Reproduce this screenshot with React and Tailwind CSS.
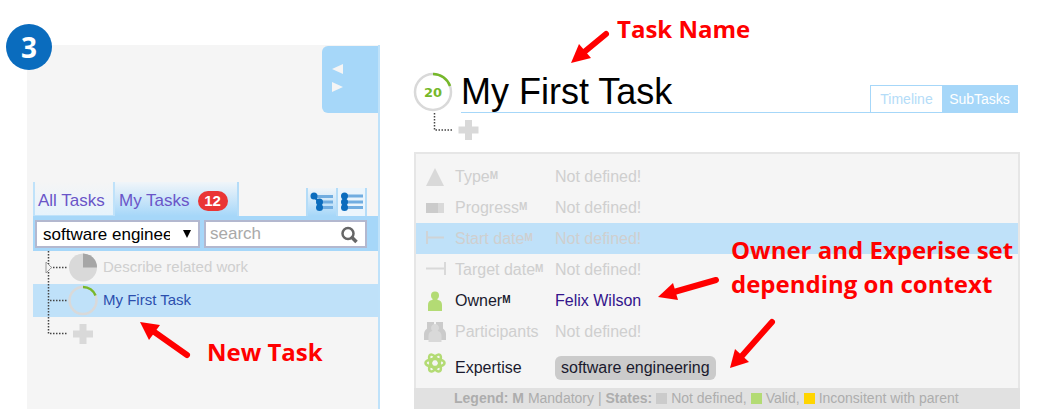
import { useState } from 'react'

const FIELDS = [
  { name: 'Type', mandatory: true, icon: TypeIcon },
  { name: 'Progress', mandatory: true, icon: ProgressIcon },
  { name: 'Start date', mandatory: true, icon: StartIcon, active: true },
  { name: 'Target date', mandatory: true, icon: TargetIcon },
  { name: 'Owner', mandatory: true, icon: OwnerIcon, value: 'Felix Wilson' },
  { name: 'Participants', icon: ParticipantsIcon },
]

export default function App() {
  return (
    <div className="relative flex items-start bg-white pb-1 pl-[27px] pr-[29px] font-['Liberation_Sans',Arial,sans-serif]">
      <Sidebar />
      <TaskDetail />
      <Annotations />
    </div>
  )
}

function Sidebar() {
  const [scope, setScope] = useState('software engineering')

  return (
    <aside className="mt-[45px] min-h-[364px] w-[353px] shrink-0 border-r-2 border-[#bfe2fa] bg-[#f5f5f5]">
      <div className="flex justify-end pt-px">
        <button
          type="button"
          aria-label="Resize panel"
          className="h-[67px] w-14 rounded-l-md bg-[#a6d7f9] pb-1 pl-2.5"
        >
          <svg width="12" height="28" viewBox="0 0 12 28" fill="#f5f5f5">
            <path d="M0 5 11 0v10zM0 18l11 5-11 5z" transform="matrix(1 0 0 1 0 0)" />
          </svg>
        </button>
      </div>

      <div className="mt-[69px] flex h-[34px] items-stretch pl-[6px] text-[17px] text-[#6a55c8]">
        <button
          type="button"
          className="w-[82px] whitespace-nowrap border-x-2 border-b border-[#bfe2fa] bg-linear-to-b from-[#f5f5f5] to-[#e6f3fc] pl-[3px] pt-1 text-left"
        >
          All Tasks
        </button>
        <button
          type="button"
          className="flex w-[124px] items-center gap-2 border-r-2 border-[#b4dcf8] bg-linear-to-b from-[#f0f5f9] to-[#a6d7f9] pl-1 pt-1"
        >
          My Tasks
          <span className="flex h-5 w-[30px] items-center justify-center rounded-full bg-[#ea3535] text-[15px] font-bold text-white">
            12
          </span>
        </button>
        <div className="ml-auto mr-[11px] mt-[6px] flex">
          <button
            type="button"
            aria-label="Tree view"
            className="flex w-[30px] justify-center border-l-2 border-[#b4dcf8] bg-linear-to-b from-[#f0f5f9] to-[#a6d7f9] pt-1"
          >
            <svg width="24" height="20" viewBox="0 0 24 20">
              <path d="M4 4.500h19M10 10h13M10 15.500h13" stroke="#71ade0" strokeWidth="3" />
              <path d="M4 4.500 9 10v6" fill="none" stroke="#0b6cbd" strokeWidth="2" />
              <g fill="#0b6cbd">
                <circle cx="4" cy="4" r="3.500" />
                <circle cx="9.500" cy="10" r="3.500" />
                <circle cx="9.500" cy="15.500" r="3.500" />
              </g>
            </svg>
          </button>
          <button
            type="button"
            aria-label="List view"
            className="flex w-[31px] justify-center border-x-2 border-[#b4dcf8] bg-[#ebf5fc] pt-1"
          >
            <svg width="24" height="20" viewBox="0 0 24 20">
              <path d="M5 4h18M5 10h18M5 15.500h18" stroke="#71ade0" strokeWidth="3" />
              <path d="M4.500 4v12" stroke="#0b6cbd" strokeWidth="2" />
              <g fill="#0b6cbd">
                <circle cx="4.500" cy="4" r="3.500" />
                <circle cx="4.500" cy="10" r="3.500" />
                <circle cx="4.500" cy="15.500" r="3.500" />
              </g>
            </svg>
          </button>
        </div>
      </div>

      <div className="ml-[6px] flex h-[35px] items-center gap-1 bg-[#a6d7f9] pl-0.5 pr-[11px] text-[17px]">
        <div className="relative w-[165px]">
          <select
            aria-label="Context"
            value={scope}
            onChange={(e) => setScope(e.target.value)}
            className="block h-7 w-full appearance-none border-2 border-[#b3b8cf] bg-white pl-1.5 pr-7 text-black"
          >
            <option>software engineering</option>
          </select>
          <svg
            className="pointer-events-none absolute right-2 top-2.5"
            width="10"
            height="8"
            viewBox="0 0 10 8"
          >
            <path d="M1 0h8L5 8z" />
          </svg>
        </div>
        <div className="relative flex-1">
          <input
            type="search"
            aria-label="Search"
            placeholder="search"
            className="block h-7 w-full border-2 border-[#b3b8cf] bg-white pl-1 pr-8 placeholder-[#a9a9a9]"
          />
          <svg
            className="pointer-events-none absolute right-2 top-1.5"
            width="18"
            height="18"
            viewBox="0 0 18 18"
            fill="none"
            stroke="#666"
          >
            <circle cx="7" cy="7.500" r="5.500" strokeWidth="2.500" />
            <path d="M10 10.500 15.500 16" strokeWidth="3.500" />
          </svg>
        </div>
      </div>

      <ul className="pl-[6px] text-[15px]">
        <TreeRow label="Describe related work" expandable className="text-[#cfcfcf]">
          <circle cx="50" cy="16.500" r="14" fill="#d9d9d9" />
          <path d="M50 16.500v-14a14 14 0 0 1 14 14z" fill="#a6a6a6" />
        </TreeRow>
        <TreeRow label="My First Task" className="bg-[#bfe1f9] text-[#2b4fae]">
          <circle cx="50" cy="16.500" r="13.500" fill="none" stroke="#d9d9d9" strokeWidth="2.500" />
          <path
            d="M50 3a13.500 13.500 0 0 1 12.500 8.500"
            fill="none"
            stroke="#76b82a"
            strokeWidth="2.500"
          />
        </TreeRow>
        <TreeRow last>
          <path d="M46.500 7h7v6.500H60v7h-6.500V27h-7v-6.500H40v-7h6.500z" fill="#d9d9d9" />
        </TreeRow>
      </ul>
    </aside>
  )
}

function TreeRow({ label, expandable, last, className = '', children }) {
  return (
    <li className={`flex h-[33px] items-center gap-1 ${className}`}>
      <svg width="66" height="33" viewBox="0 0 66 33" className="shrink-0">
        <path
          d={last ? 'M15.500 0v17' : 'M15.500 0v33'}
          stroke="#444"
          strokeWidth="1.500"
          strokeDasharray="1.500 1.500"
        />
        <path d="M17 16.500h17" stroke="#444" strokeWidth="1.500" strokeDasharray="1.500 1.500" />
        {expandable && <path d="M13 11v11l5.500-5.500z" fill="#f5f5f5" stroke="#999" />}
        {children}
      </svg>
      {label && <span>{label}</span>}
    </li>
  )
}

function TaskDetail() {
  return (
    <main className="ml-[33px] min-w-0 flex-1 pt-[72px]">
      <header className="mr-0.5 flex h-[41px] gap-2">
        <svg width="40" height="40" viewBox="0 0 40 40" className="shrink-0">
          <circle cx="20" cy="20" r="18" fill="none" stroke="#d9d9d9" strokeWidth="2.500" />
          <path d="M20 2a18 18 0 0 1 17 12" fill="none" stroke="#76b82a" strokeWidth="2.500" />
          <text
            x="20"
            y="25"
            textAnchor="middle"
            fill="#76b82a"
            className="font-['DejaVu_Sans',sans-serif] text-[13px] font-bold"
          >
            20
          </text>
        </svg>
        <div className="flex flex-1 items-end justify-between border-b border-[#a6d7f9]">
          <h1 className="text-[36px] leading-10 text-black">My First Task</h1>
          <div className="flex h-[27px] border-x border-t border-[#a6d7f9] text-[14px]">
            <button type="button" className="w-[71px] text-[#b4dcf8]">
              Timeline
            </button>
            <button type="button" className="w-[75px] bg-[#a6d7f9] text-white">
              SubTasks
            </button>
          </div>
        </div>
      </header>

      <button type="button" aria-label="Add subtask" className="block h-[39px] align-top">
        <svg width="68" height="39" viewBox="0 0 68 39">
          <path
            d="M21.500 0v17h18"
            fill="none"
            stroke="#444"
            strokeWidth="1.500"
            strokeDasharray="1.500 1.500"
          />
          <path d="M52 7h7v6.500h6.500v7H59V27h-7v-6.500h-6.500v-7H52z" fill="#d9d9d9" />
        </svg>
      </button>

      <section className="ml-px border-2 border-b-0 border-[#e6e6e6] bg-[#f5f5f5] pt-[7px]">
        <dl className="text-[16px]">
          {FIELDS.map((field) => (
            <Field key={field.name} {...field} />
          ))}
          <div className="flex h-[41px] items-center">
            <dt className="flex w-[139px] items-center gap-[9px] text-[#1a1a2e]">
              <span className="-mt-2">
                <ExpertiseIcon />
              </span>
              Expertise
            </dt>
            <dd className="rounded-md bg-[#cbcbcb] px-1.5 text-[#1a1a2e]">software engineering</dd>
          </div>
        </dl>
      </section>
      <footer className="ml-px flex h-[21px] items-center gap-1 whitespace-nowrap bg-[#e1e1e1] pl-10 text-[14px] text-[#adadad]">
        <span>
          <b>Legend: M</b> Mandatory | <b>States:</b>
        </span>
        <i className="size-[11px] bg-[#cbcbcb]" />
        <span>Not defined,</span>
        <i className="size-[11px] bg-[#b3db74]" />
        <span>Valid,</span>
        <i className="size-[11px] bg-[#ffd500]" />
        <span>Inconsitent with parent</span>
      </footer>
    </main>
  )
}

function Field({ name, mandatory, icon: Icon, value, active }) {
  return (
    <div
      className={`flex h-[31px] items-center ${active ? 'bg-[#bfe1f9]' : ''} ${
        value ? 'text-[#1a1a2e]' : 'text-[#cfcfcf]'
      }`}
    >
      <dt className="flex w-[139px] items-center gap-[9px] whitespace-nowrap">
        <Icon />
        <span className="flex">
          {name}
          {mandatory && <b className="text-[10px] leading-[22px]">M</b>}
        </span>
      </dt>
      <dd>
        {value ? (
          <a href="#owner" className="text-[#33148c]">
            {value}
          </a>
        ) : (
          'Not defined!'
        )}
      </dd>
    </div>
  )
}

function FieldIcon({ children }) {
  return (
    <svg width="22" height="24" viewBox="0 0 22 24" className="ml-2 shrink-0">
      {children}
    </svg>
  )
}

function TypeIcon() {
  return (
    <FieldIcon>
      <path d="M11 3l9 18H2z" fill="#d9d9d9" />
    </FieldIcon>
  )
}

function ProgressIcon() {
  return (
    <FieldIcon>
      <path d="M2 7h12v10H2z" fill="#cbcbcb" />
      <path d="M14 7h6v10h-6z" fill="#d9d9d9" />
    </FieldIcon>
  )
}

function StartIcon() {
  return (
    <FieldIcon>
      <path d="M3 4v13M3 10.500h17" stroke="#cfd3d6" strokeWidth="2" />
    </FieldIcon>
  )
}

function TargetIcon() {
  return (
    <FieldIcon>
      <path d="M21 4v13M2 10.500h18" stroke="#d9d9d9" strokeWidth="2" />
    </FieldIcon>
  )
}

function OwnerIcon() {
  return (
    <FieldIcon>
      <g fill="#b3db74">
        <circle cx="11" cy="6.500" r="4" />
        <path d="M4 22v-6c0-3 1.500-4.500 4-5l1-1h4l1 1c2.500.5 4 2 4 5v6z" />
      </g>
    </FieldIcon>
  )
}

function ParticipantsIcon() {
  return (
    <FieldIcon>
      <g fill="#cbcbcb">
        <path d="M3 2h7v7H3zM12 2h7v7h-7z" />
        <path d="M0 20v-6c0-3 2-5 4-6h14c2 1 4 3 4 6v6z" />
      </g>
      <path
        d="M4.500 22v-6c0-3 1.500-4.500 4-5a4 4 0 1 1 5 0c2.500.5 4 2 4 5v6z"
        fill="#d9d9d9"
      />
    </FieldIcon>
  )
}

function ExpertiseIcon() {
  return (
    <FieldIcon>
      <g fill="none" stroke="#b3db74" strokeWidth="2.500">
        {[30, 90, 150].map((angle) => (
          <ellipse
            key={angle}
            cx="11"
            cy="11"
            rx="4"
            ry="9.500"
            transform={`rotate(${angle} 11 11)`}
          />
        ))}
      </g>
    </FieldIcon>
  )
}

// Step number and the red call-outs, laid over the page
function Annotations() {
  return (
    <div className="pointer-events-none absolute inset-0 font-['Open_Sans',sans-serif] text-[24px] font-bold leading-[34px] text-[#ff0000]">
      <span className="absolute left-[6px] top-6 flex size-[46px] items-center justify-center rounded-full bg-[#0a6cbe] text-[28px] text-white">
        3
      </span>
      <p className="absolute left-[617px] top-3">Task Name</p>
      <p className="absolute left-[207px] top-[335px]">New Task</p>
      <p className="absolute left-[731px] top-[233px] whitespace-nowrap">
        Owner and Experise set
        <br />
        depending on context
      </p>
      <svg className="absolute left-0 top-0" width="800" height="400" fill="#f00" stroke="#f00">
        <g strokeWidth="6" strokeLinecap="round">
          <path d="M606 34 583 53M187 355 153 331M716 280 674 292M772 322 741 357" />
        </g>
        <g stroke="none">
          <path d="M571 63 579 44 591 58z" />
          <path d="M140 322 160 325 149 340z" />
          <path d="M658 297 673 283 678 300z" />
          <path d="M730 368 735 349 749 362z" />
        </g>
      </svg>
    </div>
  )
}
